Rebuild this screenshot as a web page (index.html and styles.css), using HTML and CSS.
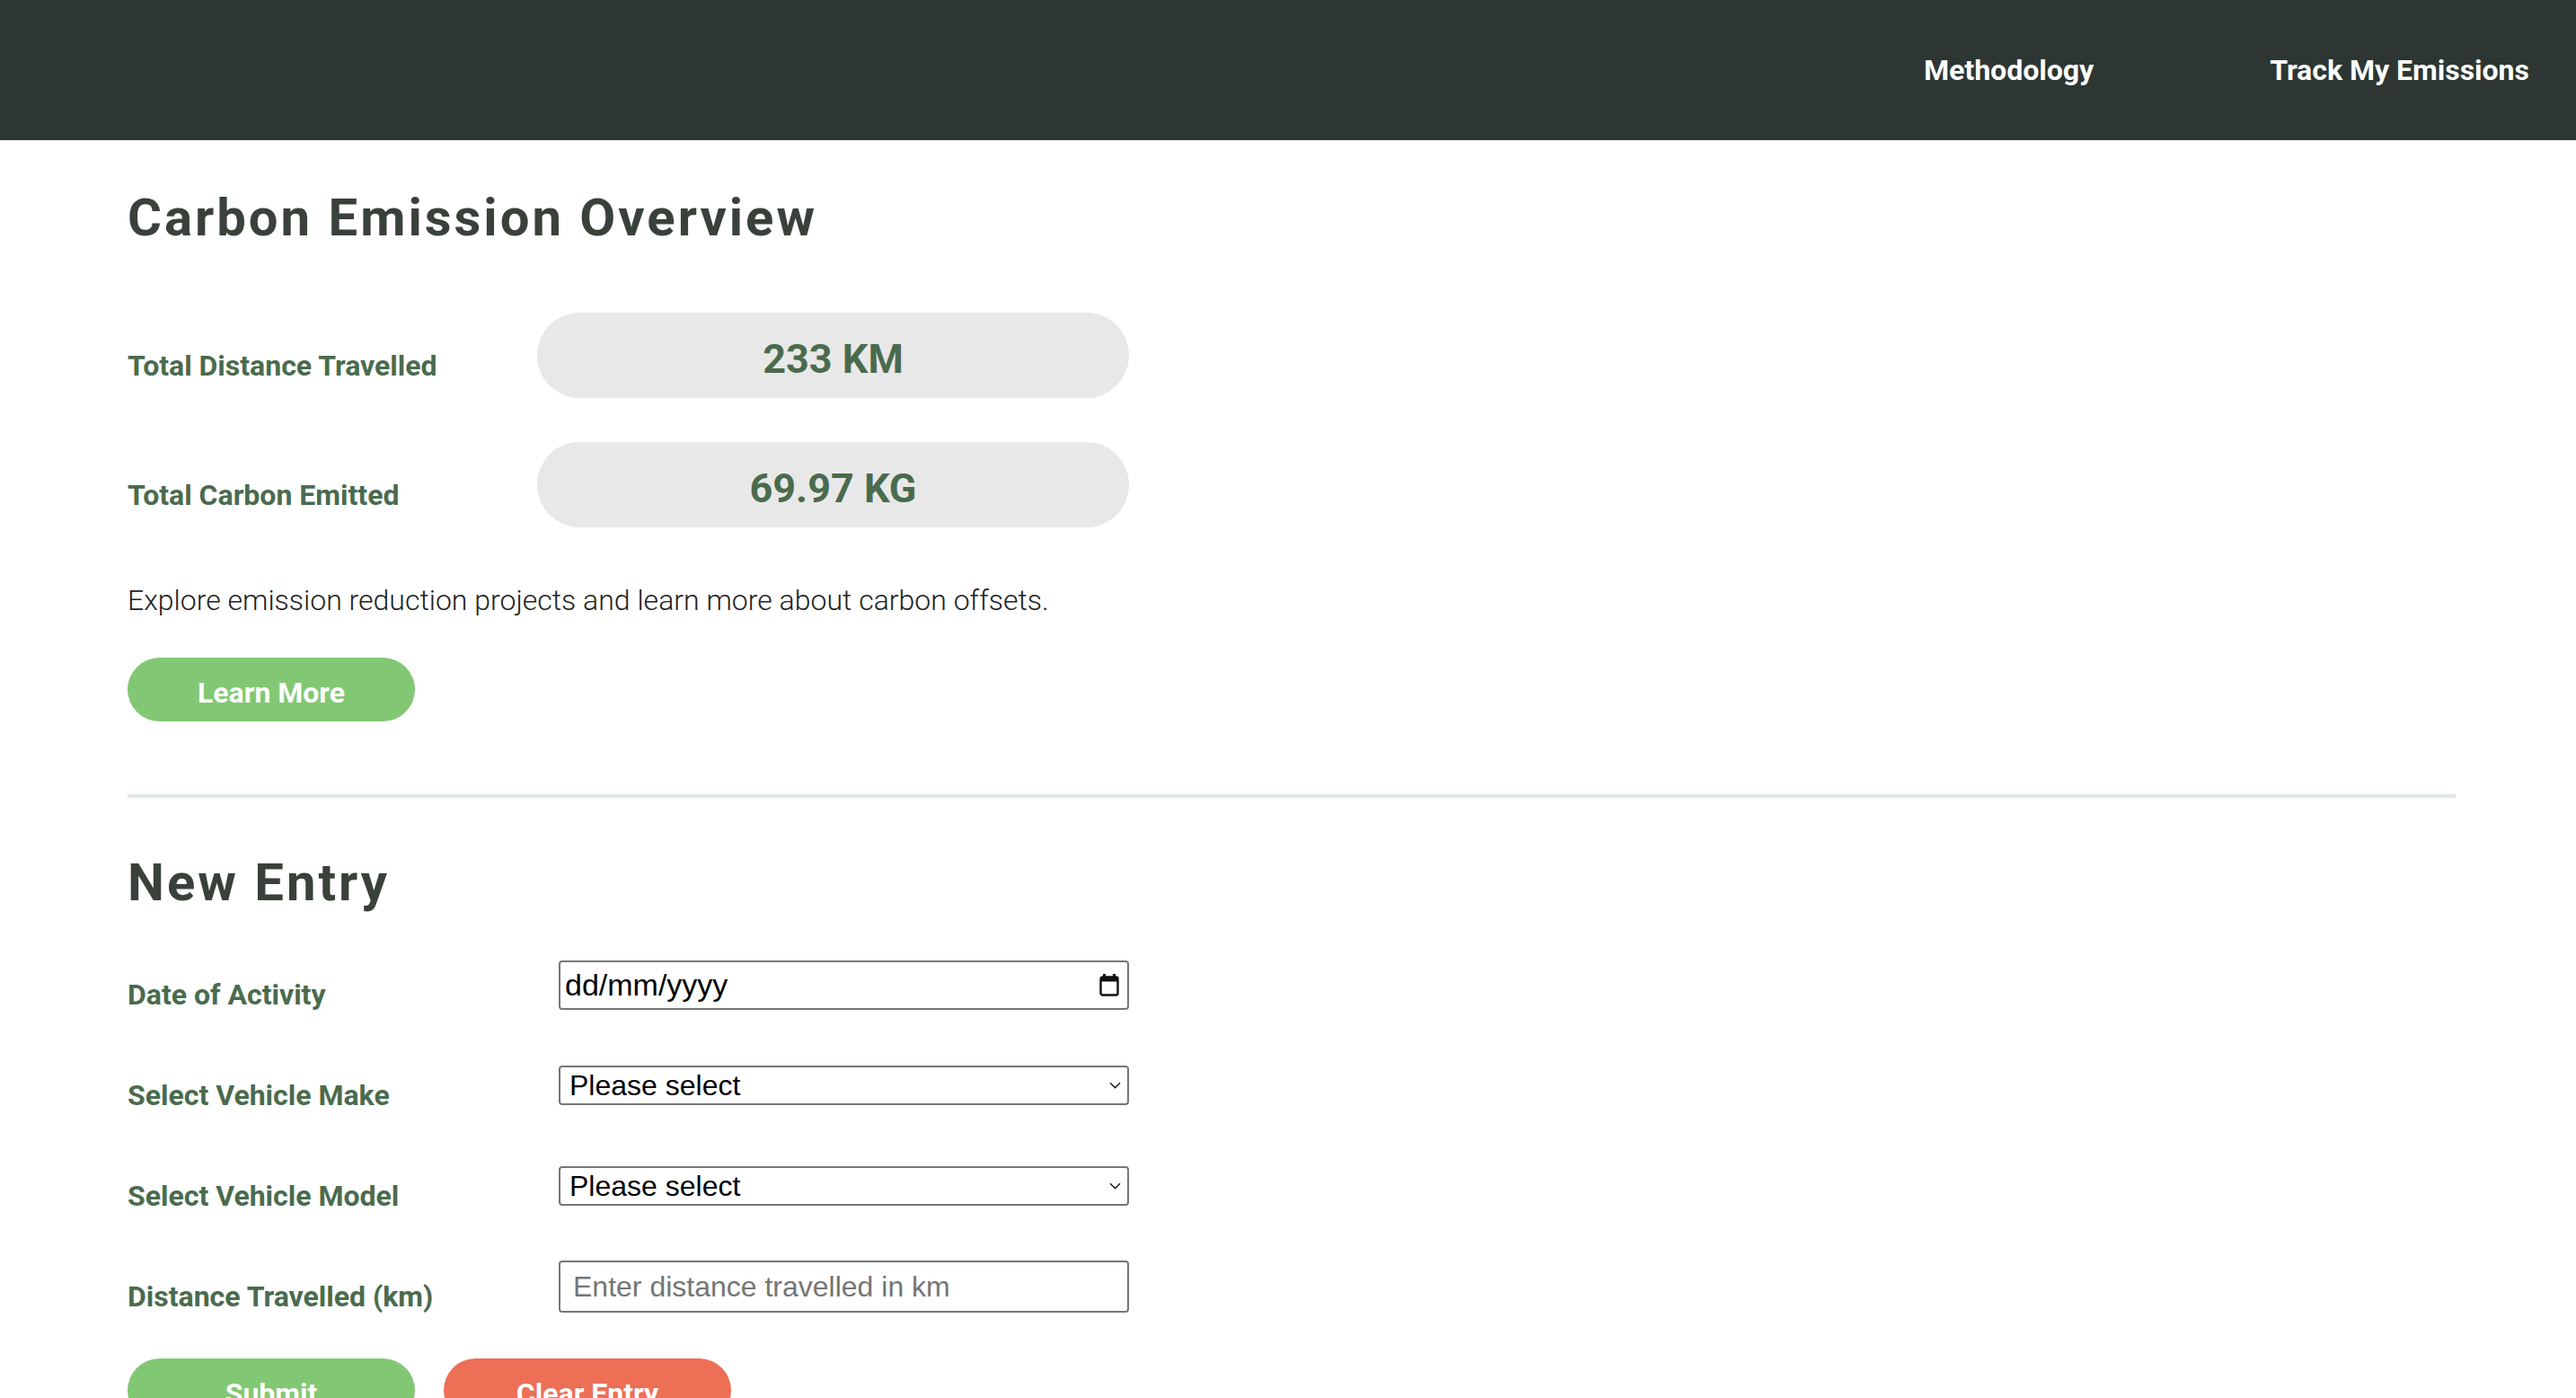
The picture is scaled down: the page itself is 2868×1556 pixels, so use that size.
FILE: index.html
```html
<!DOCTYPE html>
<html lang="en">
<head>
<meta charset="utf-8">
<title>Carbon Emission Overview</title>
<link rel="stylesheet" href="styles.css">
</head>
<body>
<header class="navbar">
  <nav class="nav-links">
    <a class="nav-link" href="#">Methodology</a>
    <a class="nav-link" href="#">Track My Emissions</a>
  </nav>
</header>
<main class="page">
  <section class="overview">
    <h1 class="section-title">Carbon Emission Overview</h1>
    <div class="stat-row">
      <span class="stat-label">Total Distance Travelled</span>
      <div class="stat-pill">233 KM</div>
    </div>
    <div class="stat-row">
      <span class="stat-label">Total Carbon Emitted</span>
      <div class="stat-pill">69.97 KG</div>
    </div>
    <p class="intro">Explore emission reduction projects and learn more about carbon offsets.</p>
    <button class="btn btn-green" type="button">Learn More</button>
  </section>
  <div class="divider"></div>
  <section class="entry">
    <h2 class="section-title entry-title">New Entry</h2>
    <form class="entry-form">
      <div class="form-row">
        <label class="form-label">Date of Activity</label>
        <div class="field date-field">
          <span class="date-text">dd/mm/yyyy</span>
          <svg class="cal-icon" width="22" height="26" viewBox="0 0 22 26">
            <rect x="4" y="1" width="3" height="5" fill="#111"/>
            <rect x="15" y="1" width="3" height="5" fill="#111"/>
            <rect x="1.5" y="4.5" width="19" height="20" rx="2" fill="none" stroke="#111" stroke-width="2.4"/>
            <rect x="1.5" y="4.5" width="19" height="5" fill="#111"/>
          </svg>
        </div>
      </div>
      <div class="form-row">
        <label class="form-label">Select Vehicle Make</label>
        <div class="select-wrap">
          <select class="field select-field"><option>Please select</option></select>
          <svg class="chevron" width="13" height="8" viewBox="0 0 13 8"><path d="M1 1.2 L6.5 6.6 L12 1.2" fill="none" stroke="#222" stroke-width="1.5"/></svg>
        </div>
      </div>
      <div class="form-row">
        <label class="form-label">Select Vehicle Model</label>
        <div class="select-wrap">
          <select class="field select-field"><option>Please select</option></select>
          <svg class="chevron" width="13" height="8" viewBox="0 0 13 8"><path d="M1 1.2 L6.5 6.6 L12 1.2" fill="none" stroke="#222" stroke-width="1.5"/></svg>
        </div>
      </div>
      <div class="form-row">
        <label class="form-label">Distance Travelled (km)</label>
        <input class="field text-field" type="text" placeholder="Enter distance travelled in km">
      </div>
      <div class="form-actions">
        <button class="btn btn-green" type="submit">Submit</button>
        <button class="btn btn-red" type="reset">Clear Entry</button>
      </div>
    </form>
  </section>
</main>
</body>
</html>
```
FILE: styles.css
```css
* { box-sizing: border-box; }
body {
  margin: 0;
  background: #ffffff;
  font-family: Roboto, "Liberation Sans", sans-serif;
}
.navbar {
  height: 156px;
  background: #2d3632;
  display: flex;
  align-items: center;
  justify-content: flex-end;
  padding-right: 52px;
}
.nav-links {
  display: flex;
  gap: 196px;
}
.nav-link {
  color: #ffffff;
  text-decoration: none;
  font-weight: 700;
  font-size: 32px;
}
.page {
  padding: 0 134px 0 142px;
}
.section-title {
  margin: 52px 0 0;
  font-size: 58px;
  font-weight: 700;
  letter-spacing: 3px;
  color: #3a413a;
  line-height: normal;
}
.stat-row {
  display: flex;
  align-items: center;
}
.overview .section-title + .stat-row { margin-top: 72px; }
.stat-row + .stat-row { margin-top: 49px; }
.stat-label {
  width: 456px;
  padding-top: 22px;
  font-size: 32px;
  font-weight: 700;
  color: #4a6b4e;
}
.stat-pill {
  width: 659px;
  height: 95px;
  border-radius: 48px;
  background: #e8e8e8;
  display: flex;
  align-items: center;
  justify-content: center;
  padding-top: 8px;
  font-size: 45px;
  font-weight: 700;
  color: #4a6b4e;
}
.intro {
  margin: 62px 0 0;
  font-size: 32px;
  font-weight: 300;
  color: #222;
}
.btn {
  width: 320px;
  height: 71px;
  border: none;
  border-radius: 36px;
  padding: 6px 0 0;
  font-family: Roboto, "Liberation Sans", sans-serif;
  font-size: 32px;
  font-weight: 700;
  color: #ffffff;
}
.overview .btn { margin-top: 45px; display: block; }
.btn-green { background: #82c874; }
.btn-red { background: #ec6f56; }
.divider {
  margin-top: 81px;
  height: 4px;
  background: #dfe8e1;
}
.entry-title { margin-top: 60px; }
.entry-form {
  margin-top: 24px;
}
.form-row {
  display: flex;
  align-items: center;
  height: 112px;
}
.form-label {
  width: 480px;
  padding-top: 22px;
  font-size: 32px;
  font-weight: 700;
  color: #4a6b4e;
}
.field {
  width: 635px;
  border: 2px solid #767676;
  border-radius: 4px;
  background: #fff;
  font-family: "Liberation Sans", Arial, sans-serif;
  color: #000;
}
.date-field {
  height: 55px;
  display: flex;
  align-items: center;
  justify-content: space-between;
  padding: 0 9px 0 5px;
  font-size: 34px;
}
.cal-icon { display: block; }
.select-wrap {
  position: relative;
  width: 635px;
}
.select-field {
  display: block;
  height: 44px;
  appearance: none;
  -webkit-appearance: none;
  padding: 0 0 0 10px;
  font-size: 32px;
}
.chevron {
  position: absolute;
  right: 9px;
  top: 18px;
}
.text-field {
  height: 58px;
  padding: 0 14px;
  font-size: 32px;
}
.text-field::placeholder { color: #757575; }
.form-actions {
  display: flex;
  gap: 32px;
  margin-top: 24px;
}
```
